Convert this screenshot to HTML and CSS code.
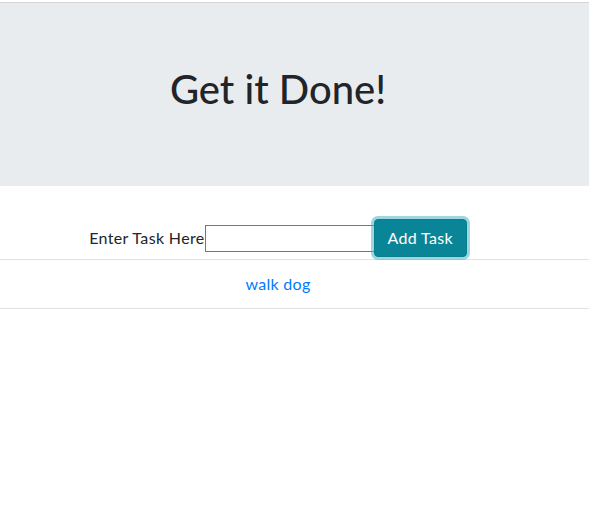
FILE: index.html
```html
<!DOCTYPE html>
<html lang="en">
<head>
<meta charset="utf-8">
<title>Get it Done!</title>
<link rel="stylesheet" href="styles.css">
</head>
<body>
<header class="jumbotron">
  <div class="inner">
    <h1 class="title">Get it Done!</h1>
  </div>
</header>
<main>
  <form class="task-form inner">
    <label class="task-label" for="task">Enter Task Here</label>
    <input class="task-input" id="task" type="text">
    <button class="btn-add" type="button">Add Task</button>
  </form>
  <ul class="task-list">
    <li class="task-item"><div class="inner"><a class="task-link" href="#">walk dog</a></div></li>
  </ul>
</main>
</body>
</html>
```

FILE: styles.css
```css
* { box-sizing: border-box; }
html, body { margin: 0; padding: 0; background: #fff; }
body {
  font-family: "Lato", "Liberation Sans", sans-serif;
  font-size: 16px;
  line-height: 1.5;
  color: #212529;
  padding-top: 2px;
}
.inner {
  width: 556px;
  text-align: center;
}
.jumbotron {
  background: #e9ecef;
  border-top: 1px solid #d6d6d6;
  padding: 62px 0 73px;
}
.title {
  margin: 0;
  font-size: 40px;
  font-weight: 500;
  line-height: 48px;
}
.task-form {
  margin-top: 33px;
  display: flex;
  justify-content: center;
  align-items: center;
}
.task-label {
  line-height: 24px;
  letter-spacing: 0.35px;
}
.task-input {
  width: 170px;
  height: 27px;
  border: 1px solid #767676;
  border-radius: 0;
  padding: 1px 2px;
  font: inherit;
  margin: 0;
}
.btn-add {
  margin-left: -1px;
  font: inherit;
  letter-spacing: 0.3px;
  line-height: 24px;
  padding: 6px 13px;
  color: #fff;
  background: #0a8598;
  border: 1px solid #0a7d8f;
  border-radius: 4px;
  box-shadow: 0 0 0 3px rgba(58, 176, 195, 0.5);
}
.task-list {
  list-style: none;
  margin: 2px 0 0;
  padding: 0;
}
.task-item {
  border-top: 1px solid #dee2e6;
  border-bottom: 1px solid #dee2e6;
  padding: 12px 0;
  line-height: 24px;
}
.task-link {
  color: #007bff;
  text-decoration: none;
  letter-spacing: 0.3px;
}
```
